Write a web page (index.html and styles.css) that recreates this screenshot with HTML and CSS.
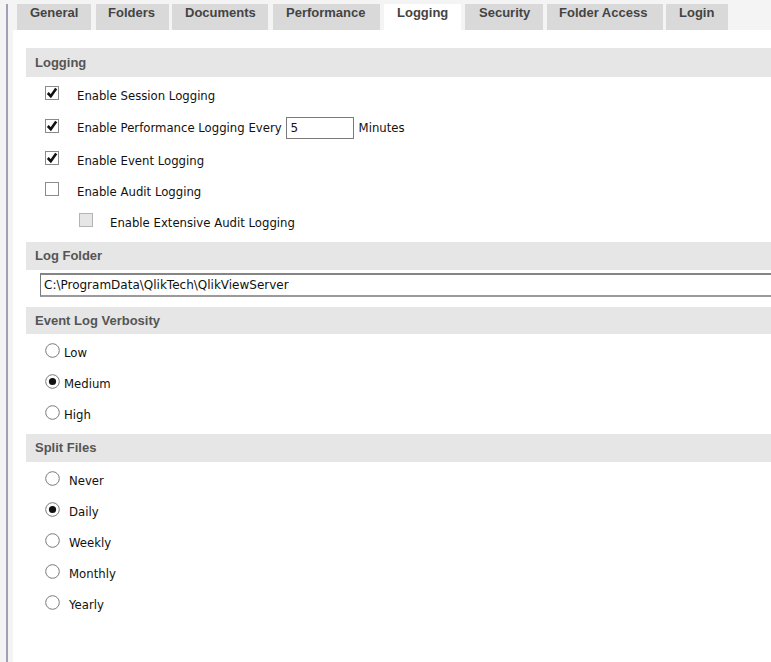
FILE: index.html
```html
<!DOCTYPE html>
<html>
<head>
<meta charset="utf-8">
<link rel="stylesheet" href="styles.css">
</head>
<body>
<div class="page">
  <div class="tabs">
    <div class="tab t-general">General</div>
    <div class="tab t-folders">Folders</div>
    <div class="tab t-documents">Documents</div>
    <div class="tab t-performance">Performance</div>
    <div class="tab t-logging active">Logging</div>
    <div class="tab t-security">Security</div>
    <div class="tab t-access">Folder Access</div>
    <div class="tab t-login">Login</div>
  </div>
  <div class="panel">
    <div class="band">Logging</div>
    <div class="checks">
      <div class="row">
        <svg class="cb" width="14" height="14" viewBox="0 0 14 14"><rect x="0.5" y="0.5" width="13" height="13" fill="#fff" stroke="#8a8a8a"/><path d="M2.8 7 L5.8 10.2 L11.2 2.6" fill="none" stroke="#111" stroke-width="2.6"/></svg>
        <span class="lbl">Enable Session Logging</span>
      </div>
      <div class="row tall">
        <svg class="cb" width="14" height="14" viewBox="0 0 14 14"><rect x="0.5" y="0.5" width="13" height="13" fill="#fff" stroke="#8a8a8a"/><path d="M2.8 7 L5.8 10.2 L11.2 2.6" fill="none" stroke="#111" stroke-width="2.6"/></svg>
        <span class="lbl">Enable Performance Logging Every</span>
        <span class="minbox">5</span>
        <span class="lbl unit">Minutes</span>
      </div>
      <div class="row">
        <svg class="cb" width="14" height="14" viewBox="0 0 14 14"><rect x="0.5" y="0.5" width="13" height="13" fill="#fff" stroke="#8a8a8a"/><path d="M2.8 7 L5.8 10.2 L11.2 2.6" fill="none" stroke="#111" stroke-width="2.6"/></svg>
        <span class="lbl">Enable Event Logging</span>
      </div>
      <div class="row">
        <svg class="cb" width="14" height="14" viewBox="0 0 14 14"><rect x="0.5" y="0.5" width="13" height="13" fill="#fff" stroke="#8a8a8a"/></svg>
        <span class="lbl">Enable Audit Logging</span>
      </div>
      <div class="row sub">
        <svg class="cb" width="14" height="14" viewBox="0 0 14 14"><rect x="0.5" y="0.5" width="13" height="13" fill="#e6e6e6" stroke="#b4b4b4"/></svg>
        <span class="lbl">Enable Extensive Audit Logging</span>
      </div>
    </div>

    <div class="band gap">Log Folder</div>
    <div class="pathbox">C:\ProgramData\QlikTech\QlikViewServer</div>

    <div class="band gap2">Event Log Verbosity</div>
    <div class="radios tight">
      <div class="row"><svg class="rb" width="15" height="15" viewBox="0 0 15 15"><circle cx="7.5" cy="7.5" r="6.8" fill="#fff" stroke="#7a7a7a"/></svg><span class="lbl">Low</span></div>
      <div class="row"><svg class="rb" width="15" height="15" viewBox="0 0 15 15"><circle cx="7.5" cy="7.5" r="6.8" fill="#fff" stroke="#7a7a7a"/><circle cx="7.5" cy="7.5" r="3.6" fill="#111"/></svg><span class="lbl">Medium</span></div>
      <div class="row"><svg class="rb" width="15" height="15" viewBox="0 0 15 15"><circle cx="7.5" cy="7.5" r="6.8" fill="#fff" stroke="#7a7a7a"/></svg><span class="lbl">High</span></div>
    </div>

    <div class="band gap">Split Files</div>
    <div class="radios wide">
      <div class="row"><svg class="rb" width="15" height="15" viewBox="0 0 15 15"><circle cx="7.5" cy="7.5" r="6.8" fill="#fff" stroke="#7a7a7a"/></svg><span class="lbl">Never</span></div>
      <div class="row"><svg class="rb" width="15" height="15" viewBox="0 0 15 15"><circle cx="7.5" cy="7.5" r="6.8" fill="#fff" stroke="#7a7a7a"/><circle cx="7.5" cy="7.5" r="3.6" fill="#111"/></svg><span class="lbl">Daily</span></div>
      <div class="row"><svg class="rb" width="15" height="15" viewBox="0 0 15 15"><circle cx="7.5" cy="7.5" r="6.8" fill="#fff" stroke="#7a7a7a"/></svg><span class="lbl">Weekly</span></div>
      <div class="row"><svg class="rb" width="15" height="15" viewBox="0 0 15 15"><circle cx="7.5" cy="7.5" r="6.8" fill="#fff" stroke="#7a7a7a"/></svg><span class="lbl">Monthly</span></div>
      <div class="row"><svg class="rb" width="15" height="15" viewBox="0 0 15 15"><circle cx="7.5" cy="7.5" r="6.8" fill="#fff" stroke="#7a7a7a"/></svg><span class="lbl">Yearly</span></div>
    </div>
  </div>
</div>
</body>
</html>
```

FILE: styles.css
```css
html, body {
  margin: 0;
  padding: 0;
  height: 100%;
  overflow: hidden;
}
body {
  background: #f4f4f4;
  font-family: "DejaVu Sans", Verdana, sans-serif;
  font-size: 11.7px;
  color: #111;
}
.page {
  margin: 4px 0 0 6px;
  border-left: 2px solid #a0a0b6;
  padding-left: 5px;
  height: 658px;
  display: flex;
  flex-direction: column;
}
.tabs {
  display: flex;
  gap: 4px;
  padding-left: 4px;
  height: 26px;
}
.tab {
  background: #d9d9d9;
  font-family: "Liberation Sans", Arial, sans-serif;
  font-weight: bold;
  font-size: 13px;
  color: #444;
  padding: 1px 0 0 13px;
  box-sizing: border-box;
  height: 26px;
  flex: none;
}
.t-general { width: 74px; }
.t-folders { width: 73px; margin-left: 1px; padding-left: 12px; }
.t-documents { width: 96px; margin-left: -1px; }
.t-performance { width: 107px; margin-left: 1px; padding-left: 13px; }
.t-logging { width: 77px; padding-left: 13px; }
.t-security { width: 78px; padding-left: 14px; }
.t-access { width: 116px; padding-left: 12px; }
.t-login { width: 62px; margin-left: -1px; padding-left: 13px; }
.tab.active {
  background: #fff;
}
.panel {
  background: #fff;
  flex: 1;
  padding: 18px 0 0 13px;
}
.band {
  background: #e6e6e6;
  height: 29px;
  line-height: 29px;
  padding-left: 9px;
  font-family: "Liberation Sans", Arial, sans-serif;
  font-weight: bold;
  font-size: 13px;
  color: #555;
}
.band.gap {
  margin-top: 4px;
  height: 28px;
  line-height: 28px;
}
.band.gap2 {
  margin-top: 10px;
  height: 27px;
  line-height: 27px;
}
.checks {
  padding-top: 3px;
  padding-left: 19px;
}
.row {
  display: flex;
  align-items: center;
  height: 31px;
}
.row.tall {
  height: 34px;
}
.cb {
  flex: none;
  margin-right: 18px;
  margin-top: -5px;
}
.row.sub {
  padding-left: 34px;
}
.row.sub .cb {
  margin-right: 17px;
  margin-top: -6px;
}
.lbl {
  white-space: nowrap;
}
.minbox {
  width: 68px;
  height: 22px;
  box-sizing: border-box;
  border: 1px solid #7a7a7a;
  margin-left: 4px;
  padding-left: 4px;
  line-height: 20px;
  font-size: 12px;
}
.unit {
  margin-left: 5px;
}
.pathbox {
  margin: 3px 0 0 14px;
  width: 760px;
  height: 24px;
  box-sizing: border-box;
  border-top: 2px solid #858585;
  border-bottom: 2px solid #9a9a9a;
  border-left: 1px solid #7a7a7a;
  padding-left: 3px;
  line-height: 20px;
  font-size: 12px;
}
.radios {
  padding-left: 19px;
  padding-top: 3px;
}
.radios.tight .rb {
  margin-right: 4px;
}
.radios.wide .rb {
  margin-right: 9px;
}
.rb {
  flex: none;
  margin-top: -4px;
}
```
